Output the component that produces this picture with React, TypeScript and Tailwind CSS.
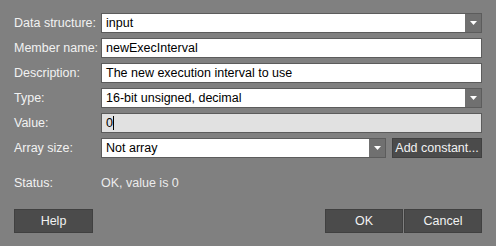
import React from 'react';

const Arrow = () => (
  <svg width="7" height="4" viewBox="0 0 7 4" className="block">
    <path d="M0 0h7L3.5 4z" fill="#ffffff" />
  </svg>
);

const Label = ({ children }: { children: React.ReactNode }) => (
  <div className="h-[20px] flex items-center text-[#f2f2f2]">{children}</div>
);

const TextField = ({ value, muted, caret }: { value: string; muted?: boolean; caret?: boolean }) => (
  <div
    className={`h-[20px] border border-[#5c5c5c] flex items-center px-[4px] text-black ${
      muted ? 'bg-[#e1e1e1]' : 'bg-white'
    }`}
  >
    <span>{value}</span>
    {caret && <span className="w-px h-[14px] bg-black" />}
  </div>
);

const Select = ({ value, className = '' }: { value: string; className?: string }) => (
  <div className={`h-[20px] border border-[#5c5c5c] flex bg-white ${className}`}>
    <div className="flex-1 flex items-center px-[4px] text-black">{value}</div>
    <div className="w-[16px] bg-[#707070] flex items-center justify-center">
      <Arrow />
    </div>
  </div>
);

const Button = ({ children, className = '' }: { children: React.ReactNode; className?: string }) => (
  <button
    className={`h-[24px] w-[78px] bg-[#4b4b4b] border border-[#404040] text-[#f2f2f2] flex items-center justify-center ${className}`}
  >
    {children}
  </button>
);

export default function App() {
  return (
    <div className="w-[496px] h-[246px] bg-[#808080] pt-[13px] px-[14px] font-['Liberation_Sans',Arial,sans-serif] text-[12.5px] leading-none">
      <div className="grid grid-cols-[87px_381px] gap-y-[5px]">
        <Label>Data structure:</Label>
        <Select value="input" />

        <Label>Member name:</Label>
        <TextField value="newExecInterval" />

        <Label>Description:</Label>
        <TextField value="The new execution interval to use" />

        <Label>Type:</Label>
        <Select value="16-bit unsigned, decimal" />

        <Label>Value:</Label>
        <TextField value="0" muted caret />

        <Label>Array size:</Label>
        <div className="flex gap-[6px]">
          <Select value="Not array" className="w-[285px]" />
          <button className="flex-1 h-[20px] bg-[#4b4b4b] border border-[#404040] text-[#f2f2f2] flex items-center justify-center">
            Add constant...
          </button>
        </div>
      </div>

      <div className="grid grid-cols-[87px_381px] mt-[15px]">
        <Label>Status:</Label>
        <div className="h-[20px] flex items-center text-[#ececec]">OK, value is 0</div>
      </div>

      <div className="flex mt-[16px]">
        <Button className="w-[79px]">Help</Button>
        <div className="flex-1" />
        <Button>OK</Button>
        <Button className="ml-px">Cancel</Button>
      </div>
    </div>
  );
}
